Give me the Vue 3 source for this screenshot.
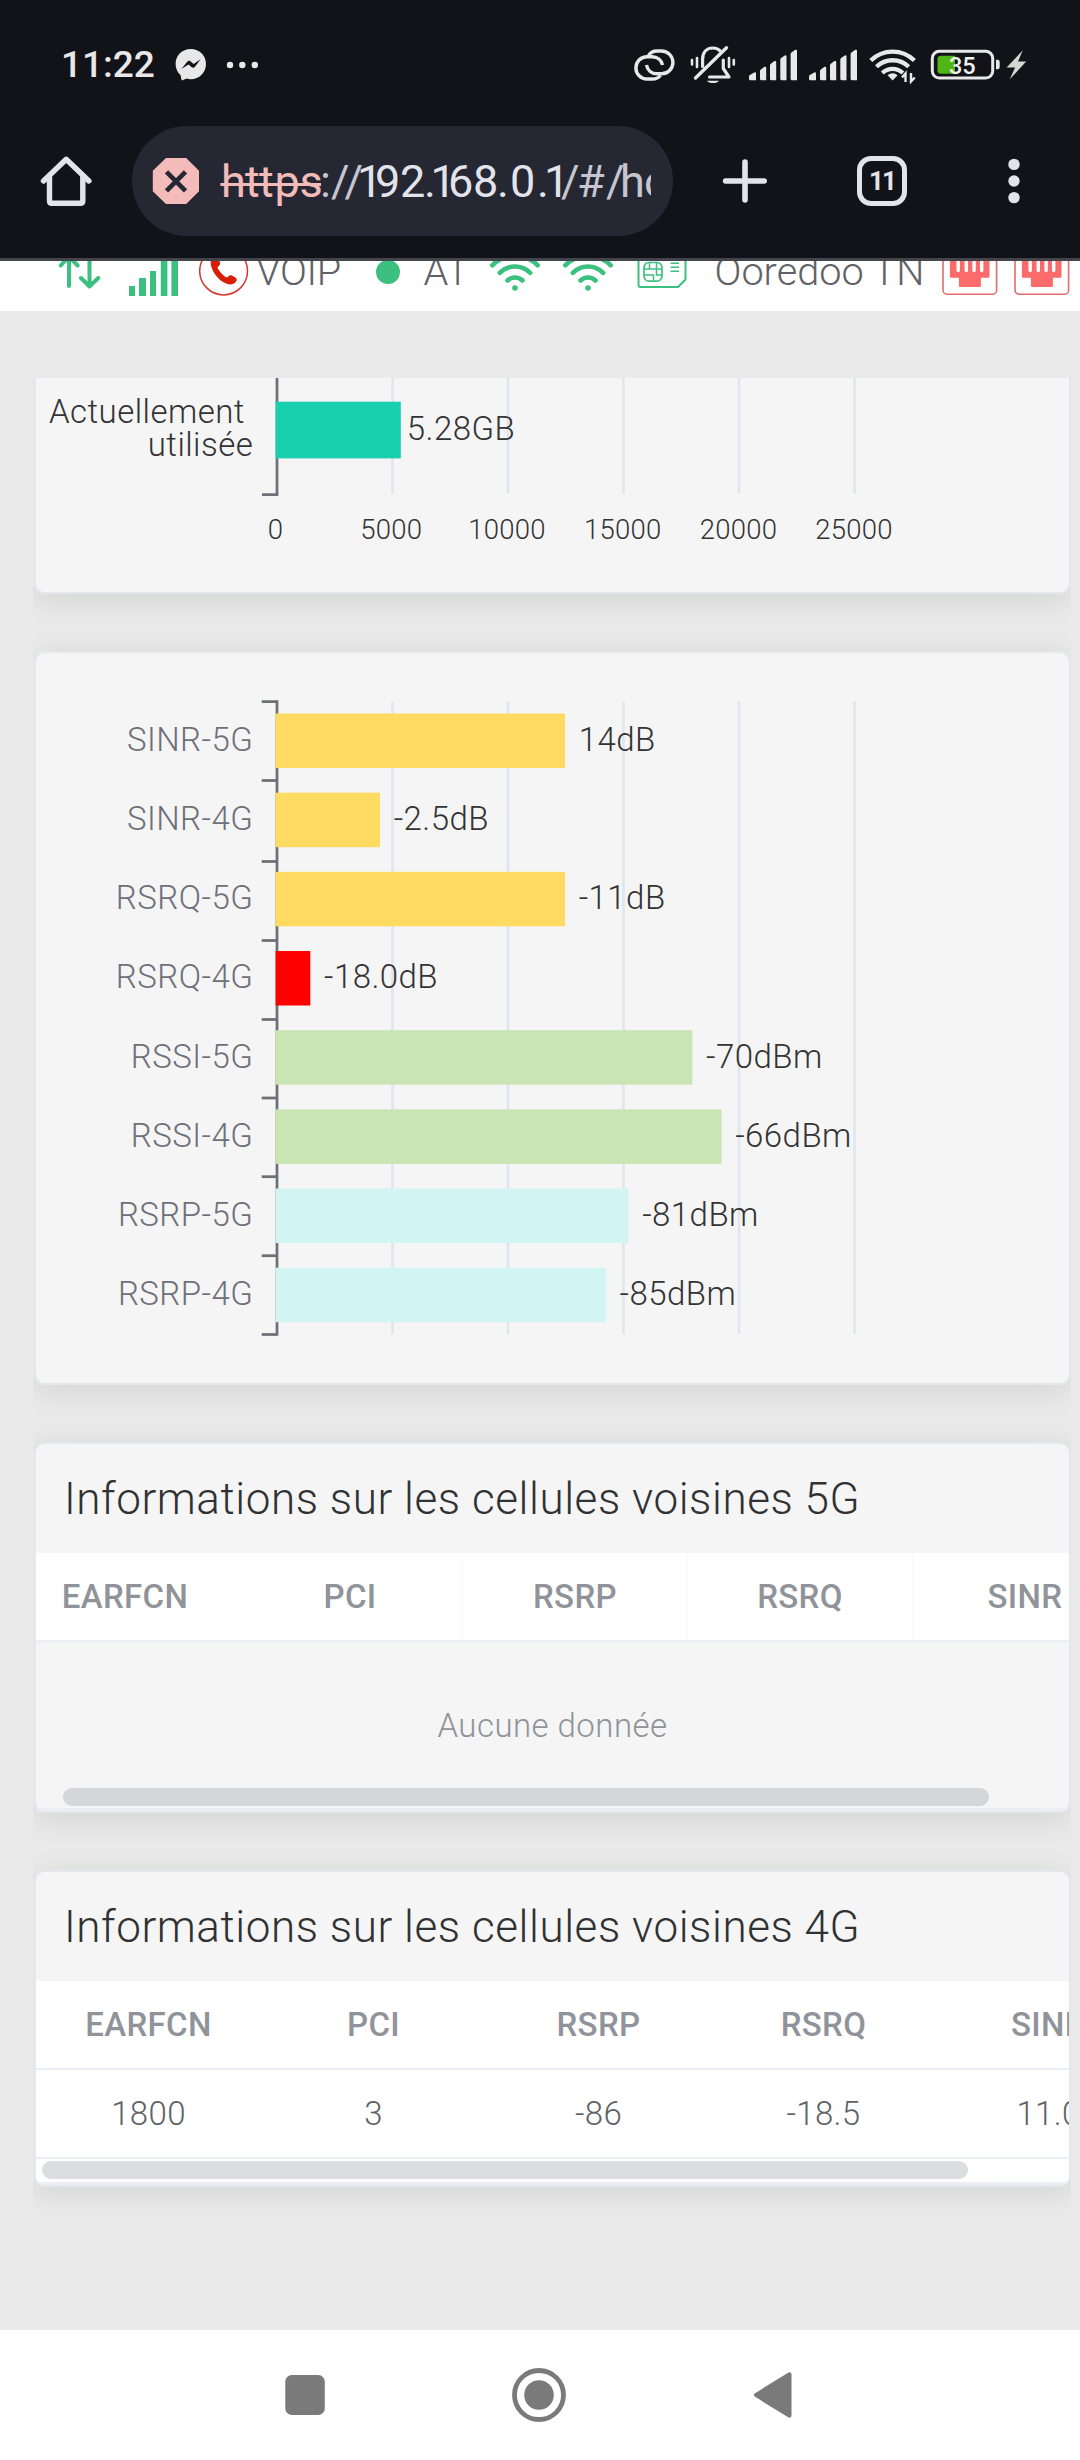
<script setup>
const axisX = 277
const gridX = [392.5, 508, 623.5, 739, 854.5]
const usageTicks = [0, 5000, 10000, 15000, 20000, 25000]

const signals = [
  { name: 'SINR-5G', value: '14dB', end: 565, color: '#ffdb62' },
  { name: 'SINR-4G', value: '-2.5dB', end: 380, color: '#ffdb62' },
  { name: 'RSRQ-5G', value: '-11dB', end: 565, color: '#ffdb62' },
  { name: 'RSRQ-4G', value: '-18.0dB', end: 310.3, color: '#ff0000' },
  { name: 'RSSI-5G', value: '-70dBm', end: 692.3, color: '#c8e5b3' },
  { name: 'RSSI-4G', value: '-66dBm', end: 721.5, color: '#c8e5b3' },
  { name: 'RSRP-5G', value: '-81dBm', end: 628.5, color: '#d2f4f3' },
  { name: 'RSRP-4G', value: '-85dBm', end: 605.8, color: '#d2f4f3' },
]
const signalTicks = [701.5, 780.5, 861.5, 940.5, 1019.5, 1098, 1176.7, 1255.7, 1334.5]

const columns = ['EARFCN', 'PCI', 'RSRP', 'RSRQ', 'SINR']
const cells4g = ['1800', '3', '-86', '-18.5', '11.0']
const statusBars = [
  { x: 749, w: 7, top: 71.7 },
  { x: 760, w: 6.2, top: 66 },
  { x: 770, w: 6.2, top: 60.3 },
  { x: 780.3, w: 6.2, top: 54.7 },
  { x: 790.6, w: 6.4, top: 49 },
]
</script>

<template>
  <div class="screen">
    <header class="chrome">
      <div class="status">
        <span class="clock">11:22</span>
        <svg class="messenger" width="32" height="34" viewBox="175 48 32 34">
          <path fill="#e8e8e8" d="M190.800 49C182 49 175.600 55.600 175.600 64c0 4.600 1.900 8.500 5 11.200l.9 4.600c.1.500.6.700 1 .500l4.200-1.700c1.300.4 2.700.6 4.100.6C199.400 79.200 206 72.500 206 64S199.400 49 190.800 49z" />
          <path fill="#121318" d="M181.500 69l5.700-7.300c.8-1 2.200-1.200 3.200-.4l3.200 2.600 7-4.700-5.600 7.500c-.8 1-2.200 1.300-3.200.5l-3.400-2.700z" />
        </svg>
        <svg class="more" width="34" height="10" viewBox="226 59 34 10" fill="#e8e8e8">
          <circle cx="230" cy="64" r="3.200" /><circle cx="242.300" cy="64" r="3.200" /><circle cx="254.800" cy="64" r="3.200" />
        </svg>
        <span class="spacer"></span>
        <svg width="46" height="42" viewBox="632 43 46 42" fill="none" stroke="#e8e8e8" stroke-width="3.400">
          <path d="M648.500 54.500C650.500 51.500 653.500 50 657 50H661.500a11.400 11.400 0 0 1 0 22.800H657C651.500 72.800 647.500 69.500 646.500 64" />
          <path d="M660.500 74.500C658.500 77 656 78 652.500 78H647a11.100 11.100 0 0 1 0-22.200H652C657.500 55.800 661.500 59 662.500 64" />
        </svg>
        <svg class="bell" width="48" height="42" viewBox="689 44 48 42" fill="none" stroke="#e8e8e8" stroke-width="3.200" stroke-linecap="round">
          <path d="M695.500 78L726.500 47.800" stroke-width="3.400" />
          <path d="M702.600 66.500V59.500C702.600 52 707 48 712.900 48 715.500 48 718 48.800 719.800 50.500" />
          <path d="M709.500 77H729L723.300 68.500V60" stroke-linejoin="round" />
          <path d="M707 80.700h12c-1.500 3.200-10.500 3.200-12 0z" fill="#e8e8e8" stroke="none" />
          <path d="M692 60v4.500M697 58v9M729 58v9M733.800 60v4.500" stroke-width="2.600" />
        </svg>
        <svg v-for="n in 2" :key="n" class="bars" width="50" height="34" viewBox="748 47.500 50 34" fill="#e8e8e8">
          <path
            v-for="b in statusBars" :key="b.x"
            :d="`M${b.x} ${b.top + 4.500}q0-1 .8-1.600l${b.w - 2.500}-2.600q1.700-.6 1.700 1V79.800h-${b.w - 1.500}q-1.500 0-1.500-1.500z`"
          />
        </svg>
        <svg class="swifi" width="50" height="38" viewBox="868 46 50 38" fill="none" stroke="#e8e8e8" stroke-width="4.300">
          <path d="M870.800 60.500a31 31 0 0 1 43.600 0M876.500 66.800a23 23 0 0 1 32.200 0M882.300 73a15 15 0 0 1 20.600 0" />
          <path d="M892.600 80.500l-5-5.200c2.800-2.700 7.200-2.700 10 0z" fill="#e8e8e8" stroke="none" />
          <path d="M905.500 82v-8.500l-3.500 4M911 73v8.500l3.800-4" stroke-width="2.400" />
        </svg>
        <svg class="battery" width="70" height="32" viewBox="930 48.500 70 32">
          <rect x="932.300" y="50.800" width="60.400" height="26.800" rx="7" fill="none" stroke="#e8e8e8" stroke-width="3" />
          <path d="M941 55.300h14v18H941q-3.500 0-3.500-3.500V58.800q0-3.500 3.500-3.500z" fill="#4fb614" />
          <path d="M996 59.300h1.500q2.200 0 2.200 2.200v5q0 2.200-2.200 2.200H996z" fill="#e8e8e8" />
          <text x="962.300" y="73.200" text-anchor="middle" font-size="23.500" font-weight="500" fill="#f0f0f0">35</text>
        </svg>
        <svg class="bolt" width="22" height="32" viewBox="1006 48.500 22 32">
          <path d="M1022.800 49.800L1006.600 67h8.500l-5.300 11.800L1026.200 61h-8.200z" fill="#d6d7d3" />
        </svg>
      </div>

      <div class="toolbar">
        <svg class="home" width="52" height="52" viewBox="40 155 52 52" fill="none" stroke="#e3e3ec" stroke-width="5.400" stroke-linejoin="round" stroke-linecap="round">
          <path d="M43.500 181L66.200 159.300 88.900 181" /><path d="M49.500 176V201q0 2.300 2.300 2.300H80.500q2.300 0 2.300-2.300V176" />
        </svg>
        <div class="omnibox">
          <svg width="519" height="110" viewBox="132 126 519 110">
            <path d="M166 158h20.200L199 170.800v20.400L186.200 204H166l-13.200-12.800V170.800z" fill="#f3bbba" />
            <path d="M166.500 171.800l19 19M185.500 171.800l-19 19" stroke="#252733" stroke-width="4.600" />
            <g font-size="45" fill="#c6c6d0">
              <text x="221 245 259 274.600 299.500" y="197" fill="#f3bbba">https</text>
              <text x="320 331 344.500" y="197">://</text>
              <text x="357 375 400 424 430.600 448 473 497 510 537 544" y="197" fill="#e3e3ec">192.168.0.1</text>
              <text x="561 577 606 620 644" y="197">/#/ho</text>
            </g>
            <path d="M220.400 184.500H321" stroke="#f3bbba" stroke-width="3" />
          </svg>
        </div>
        <svg class="plus" width="46" height="46" viewBox="722 158 46 46" stroke="#e3e3ec" stroke-width="5.600" stroke-linecap="round">
          <path d="M725.600 181H764.200M745 162v38" />
        </svg>
        <span class="tabs">11</span>
        <svg class="kebab" width="14" height="48" viewBox="1007 157 14 48" fill="#e3e3ec">
          <circle cx="1014" cy="164.400" r="5.700" /><circle cx="1014" cy="181" r="5.700" /><circle cx="1014" cy="197.600" r="5.700" />
        </svg>
      </div>
    </header>

    <div class="strip">
      <div class="strip-row">
        <svg width="120" height="50" viewBox="59 246 120 50">
          <path d="M69 286V256.500M60.800 265.500L69 256.500l8.600 9M89.500 256v30M81 278l8.500 8.500 8.700-8.500" fill="none" stroke="#3cc07f" stroke-width="4" stroke-linecap="round" stroke-linejoin="round" />
          <path d="M129 286h6v10h-6zM139 278h7v18h-7zM150 271h6v25h-6zM160.800 259h6.600v37h-6.600zM171.400 249h6.600v47h-6.600z" fill="#3cc07f" />
        </svg>
        <svg class="phone" width="50" height="50" viewBox="199 246 50 50">
          <circle cx="223.600" cy="271" r="23.900" fill="none" stroke="#cf3c2c" stroke-width="1.500" />
          <path d="M213 257c2-1.500 4.500-.5 5.500 1.500l1.500 4c.5 2-.5 3-2 4.200-.8.800 0 2 1 3.500 1.600 2.300 3.500 4.500 5.800 6.200 1.200.9 2.200 1.200 3 .5 1.500-1.500 2.500-2.200 4.500-1.200l3 1.800c1.800 1.200 1.800 3 .5 4.500-1.800 2.300-5 3-8.300 2-8-2.500-14.500-10.500-16.500-18.500-.8-3.500 0-6.500 2-8.500z" fill="#d81e06" />
        </svg>
        <span class="label voip">VOIP</span>
        <svg class="dot" width="26" height="50" viewBox="374.500 246 26 50"><circle cx="387.500" cy="272" r="12" fill="#3cc07f" /></svg>
        <span class="label at">AT</span>
        <svg v-for="n in 2" :key="n" class="wifi" width="52" height="50" viewBox="489 246 52 50" fill="none" stroke="#3cc07f" stroke-width="4.600" stroke-linecap="round">
          <circle cx="515" cy="288" r="2.800" fill="#3cc07f" stroke="none" />
          <path d="M507.500 280.500a10.700 10.700 0 0 1 15 0M499.800 272.800a21.500 21.500 0 0 1 30.400 0M492.300 265.300a32.100 32.100 0 0 1 45.400 0" />
        </svg>
        <svg class="sim" width="50" height="50" viewBox="636.500 246 50 50" fill="none" stroke="#3cc07f" stroke-width="2">
          <path d="M640 250H683q2 0 2 2V279.500l-7.500 7.500H640q-2 0-2-2V252q0-2 2-2z" />
          <rect x="643.500" y="262.500" width="18" height="18.700" rx="5" stroke-width="1.700" />
          <path d="M643.500 269h18M643.500 275h9.500v5.500M649 262.500v6.500M656 262.500v12.500h5.500M670 263.300h8.500M670 267.300h8.500M670 271.300h8.500" stroke-width="1.500" />
        </svg>
        <span class="label operator">Ooredoo TN</span>
        <svg v-for="n in 2" :key="n" class="port" width="56" height="50" viewBox="941.500 246 56 50">
          <rect x="942.500" y="242" width="53.600" height="52.200" rx="4" fill="none" stroke="#e06c6c" stroke-width="1.600" />
          <path d="M949.400 252H989v24.700q0 1-1 1h-7.600V286q0 1-1 1h-20q-1 0-1-1v-8.300h-8q-1 0-1-1z" fill="#fb6b6b" />
          <path d="M957.700 256v14.500M965.800 256v14.500M973.600 256v14.500M981.200 256v14.500" stroke="#fff" stroke-width="3.400" stroke-linecap="round" />
        </svg>
      </div>
    </div>

    <main class="scroller">
      <section class="card usage">
        <svg width="1033" height="214" viewBox="36 378 1033 214">
          <path v-for="x in gridX" :key="x" :d="`M${x} 378V493.500`" class="grid" />
          <path :d="`M${axisX} 378V494.500H262`" class="axis" />
          <rect x="275.600" y="401.700" width="125.200" height="56.700" fill="#18cfae" />
          <text x="49" y="422.700" class="dark">Actuellement</text>
          <text x="253.200" y="456.300" text-anchor="end" class="dark">utilisée</text>
          <text x="406.800" y="440.300" class="dark">5.28GB</text>
          <text v-for="(t, i) in usageTicks" :key="t" :x="275.600 + i * 115.700" y="538.700" text-anchor="middle" class="tick">{{ t }}</text>
        </svg>
      </section>

      <section class="card">
        <svg width="1033" height="730" viewBox="36 653 1033 730">
          <path v-for="x in gridX" :key="x" :d="`M${x} 701.500V1334`" class="grid" />
          <path :d="`M${axisX} 700.200V1335.800`" class="axis" />
          <path v-for="y in signalTicks" :key="y" :d="`M261.700 ${y}H${axisX}`" class="axis" />
          <template v-for="(s, i) in signals" :key="s.name">
            <rect x="275.600" :y="713.500 + i * 79.170" :width="s.end - 275.600" height="54.500" :fill="s.color" />
            <text x="253.200" :y="751 + i * 79.140" text-anchor="end" class="name">{{ s.name }}</text>
            <text :x="s.end + 13.700" :y="751 + i * 79.140" class="dark">{{ s.value }}</text>
          </template>
        </svg>
      </section>

      <section class="card">
        <h2>Informations sur les cellules voisines 5G</h2>
        <div class="row head shifted">
          <span v-for="c in columns" :key="c">{{ c }}</span>
        </div>
        <div class="empty">Aucune donnée</div>
        <div class="thumb first"></div>
        <div class="foot"></div>
      </section>

      <section class="card">
        <h2>Informations sur les cellules voisines 4G</h2>
        <div class="row head">
          <span v-for="c in columns" :key="c">{{ c }}</span>
        </div>
        <div class="row body">
          <span v-for="c in cells4g" :key="c">{{ c }}</span>
        </div>
        <div class="track"><div class="thumb second"></div></div>
        <div class="foot"></div>
      </section>
    </main>

    <nav class="navbar">
      <svg width="40" height="56" viewBox="285 2367 40 56"><rect x="285.300" y="2375" width="39.500" height="40" rx="6.500" fill="#7a7a7a" /></svg>
      <svg class="circle" width="56" height="56" viewBox="511 2367 56 56">
        <circle cx="539" cy="2395" r="24.500" fill="none" stroke="#7a7a7a" stroke-width="4.800" />
        <circle cx="539" cy="2395" r="14.800" fill="#7a7a7a" />
      </svg>
      <svg class="back" width="40" height="56" viewBox="753 2367 40 56">
        <path d="M756.300 2395L789.300 2374.500V2415.500z" fill="#7a7a7a" stroke="#7a7a7a" stroke-width="4.400" stroke-linejoin="round" />
      </svg>
    </nav>
  </div>
</template>

<style>
body {
  margin: 0;
  background: #eaeaea;
}
</style>

<style scoped>
.screen {
  width: 1080px;
  height: 2460px;
  overflow: hidden;
  display: flex;
  flex-direction: column;
  background: #eaeaea;
  font-family: Roboto, "Liberation Sans", sans-serif;
}
svg {
  display: block;
  flex: none;
}
.chrome {
  flex: none;
  box-sizing: border-box;
  height: 261px;
  background: #121318;
  border-bottom: 3px solid #43444c;
}
.status {
  box-sizing: border-box;
  height: 126px;
  padding: 3px 52px 0 61px;
  display: flex;
  align-items: center;
}
.clock {
  width: 94px;
  font-size: 37px;
  font-weight: 500;
  color: #e8e8e8;
  white-space: nowrap;
}
.messenger { margin-left: 20px; }
.more { margin-left: 19px; }
.spacer { flex: 1; }
.bell { margin-left: 11px; }
.bars { margin-left: 11px; }
.bars + .bars { margin-left: 10px; }
.swifi { margin-left: 10px; }
.battery { margin-left: 12px; }
.bolt { margin-left: 6px; }
.toolbar {
  height: 110px;
  padding-left: 40px;
  display: flex;
  align-items: center;
}
.omnibox {
  width: 541px;
  height: 110px;
  margin-left: 40px;
  border-radius: 55px;
  background: #252733;
}
.plus { margin-left: 49px; }
.tabs {
  box-sizing: border-box;
  width: 50px;
  height: 50px;
  margin-left: 89px;
  border: 5px solid #e3e3ec;
  border-radius: 14px;
  color: #e3e3ec;
  font-size: 26px;
  font-weight: 700;
  line-height: 41px;
  text-align: center;
  letter-spacing: -2px;
}
.kebab { margin-left: 100px; }
.strip {
  flex: none;
  height: 50px;
  overflow: hidden;
  background: #fff;
}
.strip-row {
  height: 50px;
  margin-top: -15px;
  padding-left: 59px;
  display: flex;
  align-items: center;
}
.label {
  flex: none;
  padding-top: 2px;
  font-size: 39.700px;
  font-weight: 300;
  line-height: 50px;
  color: #606266;
  white-space: nowrap;
}
.phone { margin-left: 20px; }
.voip { width: 92px; margin-left: 7px; letter-spacing: -0.300px; }
.dot { margin-left: 26.500px; }
.at { width: 50.500px; margin-left: 23px; }
.wifi { margin-left: 15px; }
.wifi + .wifi { margin-left: 21px; }
.sim { margin-left: 22.500px; }
.operator { width: 212px; margin-left: 28px; }
.port { margin-left: 15px; }
.port + .port { margin-left: 16.500px; }
.scroller {
  flex: none;
  box-sizing: border-box;
  width: 1038px;
  height: 1952px;
  margin: 67px 0 0 33px;
  overflow: hidden;
}
.card {
  box-sizing: border-box;
  border: 2px solid #e4e7ed;
  border-left-width: 3px;
  border-radius: 11px;
  background: #f5f5f5;
  box-shadow: 0 5.500px 33px rgba(0, 0, 0, 0.1);
  margin-bottom: 57px;
  overflow: hidden;
}
.usage {
  border-top: 0;
  border-top-left-radius: 0;
  border-top-right-radius: 0;
}
.grid {
  stroke: #e0e6f1;
  stroke-width: 2.750;
}
.axis {
  fill: none;
  stroke: #6e7079;
  stroke-width: 2.750;
}
.dark, .name {
  font-size: 33px;
  font-weight: 300;
  letter-spacing: 0.450px;
  fill: #333;
}
.name { fill: #6e7079; }
.tick {
  font-size: 27.500px;
  font-weight: 300;
  letter-spacing: 0.250px;
  fill: #333;
}
h2 {
  box-sizing: border-box;
  height: 109px;
  margin: 0;
  padding-left: 28px;
  font-size: 44px;
  font-weight: 300;
  letter-spacing: 0.560px;
  line-height: 110px;
  color: #303133;
  white-space: nowrap;
}
.row {
  display: flex;
  background: #fff;
  border-bottom: 2px solid #ebeef5;
  font-size: 33px;
  letter-spacing: 0.350px;
  line-height: 87px;
  height: 87px;
}
.row span {
  flex: none;
  width: 225px;
  text-align: center;
}
.head {
  font-weight: 500;
  color: #909399;
}
.shifted span:first-child { margin-left: -23px; }
.shifted span {
  box-sizing: border-box;
  border-right: 1px solid #fafafa;
}
.body {
  font-weight: 300;
  color: #606266;
}
.empty {
  height: 145px;
  padding-top: 1px;
  font-size: 33px;
  font-weight: 300;
  letter-spacing: 0.450px;
  line-height: 166px;
  text-align: center;
  color: #909399;
}
.thumb {
  width: 926px;
  height: 18px;
  border-radius: 9px;
}
.first {
  margin: 0 0 2px 27px;
  background: #d5d6d8;
}
.track {
  padding: 2px 0 3px 6px;
  background: #fff;
}
.second { background: #dcddde; }
.foot {
  height: 3px;
  background: #ebeef5;
}
.navbar {
  flex: none;
  height: 130px;
  padding-left: 285px;
  display: flex;
  align-items: center;
  background: #fff;
}
.circle { margin-left: 186px; }
.back { margin-left: 186px; }
</style>
